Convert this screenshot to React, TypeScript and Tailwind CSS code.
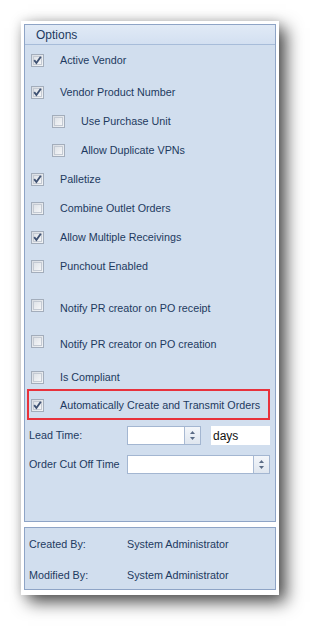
import React from "react";

const F = { fontFamily: '"Liberation Sans", Arial, sans-serif' };

function Check({ checked, className = "" }: { checked?: boolean; className?: string }) {
  return (
    <div
      className={`w-[13px] h-[13px] shrink-0 border border-[#a3adbb] bg-gradient-to-br from-[#d9dde3] to-[#f2f4f6] flex items-center justify-center ${className}`}
    >
      <div className="w-[9px] h-[9px] border border-[#c4cad3] bg-gradient-to-br from-[#dfe3e8] to-[#f5f6f8] flex items-center justify-center">
        {checked && (
          <svg width="9" height="9" viewBox="0 0 9 9" className="overflow-visible">
            <path d="M1.2 4.2 L3.4 7 L7.8 0.8" fill="none" stroke="#3f5273" strokeWidth="1.9" />
          </svg>
        )}
      </div>
    </div>
  );
}

function Row({
  label,
  checked,
  sub,
  mt,
  lift,
}: {
  label: string;
  checked?: boolean;
  sub?: boolean;
  mt: string;
  lift?: boolean;
}) {
  return (
    <div className={`flex items-center h-[20px] ${mt} ${sub ? "pl-[27px]" : "pl-[6px]"}`}>
      <Check checked={checked} className={lift ? "mb-[6px]" : ""} />
      <span className="ml-[16px] text-[10.75px] text-[#1d3a60] whitespace-nowrap">{label}</span>
    </div>
  );
}

function Spin() {
  return (
    <div className="w-[16px] h-full border-l border-[#a9bad3] bg-gradient-to-b from-[#f3f6fa] to-[#dfe6ef] flex flex-col items-center justify-center gap-[3px]">
      <svg width="5" height="3" viewBox="0 0 5 3">
        <path d="M0 3 L2.5 0 L5 3 Z" fill="#5a6b85" />
      </svg>
      <svg width="5" height="3" viewBox="0 0 5 3">
        <path d="M0 0 L2.5 3 L5 0 Z" fill="#5a6b85" />
      </svg>
    </div>
  );
}

export default function App() {
  return (
    <div className="w-[322px] h-[638px] bg-white pt-[21px] pl-[21px]" style={F}>
      <div className="w-[258px] h-[574px] bg-white pt-[3px] pl-[3px] shadow-[7px_7px_16px_rgba(0,0,0,0.7),0_0_10px_rgba(0,0,0,0.12)]">
        <div className="w-[252px] h-[498px] border border-[#8ea4c6] bg-[#d1deee] flex flex-col">
          <div className="h-[20px] border-b border-[#a7bcd9] bg-gradient-to-b from-[#e1eaf6] to-[#d3e0f1] flex items-center pl-[11px]">
            <span className="text-[12px] text-[#1d3a60]">Options</span>
          </div>
          <Row label="Active Vendor" checked mt="mt-[5px]" />
          <Row label="Vendor Product Number" checked mt="mt-[12px]" />
          <Row label="Use Purchase Unit" sub mt="mt-[9px]" />
          <Row label="Allow Duplicate VPNs" sub mt="mt-[9px]" />
          <Row label="Palletize" checked mt="mt-[9px]" />
          <Row label="Combine Outlet Orders" mt="mt-[9px]" />
          <Row label="Allow Multiple Receivings" checked mt="mt-[9px]" />
          <Row label="Punchout Enabled" mt="mt-[9px]" />
          <Row label="Notify PR creator on PO receipt" mt="mt-[22px]" lift />
          <Row label="Notify PR creator on PO creation" mt="mt-[16px]" lift />
          <Row label="Is Compliant" mt="mt-[13px]" />
          <div className="mt-[2px] ml-[2px] w-[243px] h-[31px] border-2 border-[#e8323c] flex items-center pl-[2px] pt-[2px]">
            <Check checked />
            <span className="ml-[16px] text-[10.75px] text-[#1d3a60] whitespace-nowrap">
              Automatically Create and Transmit Orders
            </span>
          </div>
          <div className="mt-[6px] h-[19px] flex items-center pl-[4px]">
            <span className="w-[98px] text-[10.75px] text-[#1d3a60]">Lead Time:</span>
            <div className="w-[74px] h-[19px] border border-[#a3b6d1] bg-white flex justify-end">
              <Spin />
            </div>
            <div className="ml-[10px] w-[59px] h-[19px] bg-white flex items-center pl-[2px]">
              <span className="text-[12px] text-[#111]">days</span>
            </div>
          </div>
          <div className="mt-[10px] h-[19px] flex items-center pl-[4px]">
            <span className="w-[98px] text-[10.75px] text-[#1d3a60] whitespace-nowrap">Order Cut Off Time</span>
            <div className="w-[143px] h-[19px] border border-[#a3b6d1] bg-white flex justify-end">
              <Spin />
            </div>
          </div>
        </div>
        <div className="mt-[5px] w-[252px] h-[63px] border border-[#8ea4c6] bg-[#d1deee] flex flex-col pl-[4px]">
          <div className="mt-[6px] h-[20px] flex items-center">
            <span className="w-[98px] text-[10.75px] text-[#1d3a60]">Created By:</span>
            <span className="text-[10.75px] text-[#1d3a60]">System Administrator</span>
          </div>
          <div className="mt-[11px] h-[20px] flex items-center">
            <span className="w-[98px] text-[10.75px] text-[#1d3a60]">Modified By:</span>
            <span className="text-[10.75px] text-[#1d3a60]">System Administrator</span>
          </div>
        </div>
      </div>
    </div>
  );
}
